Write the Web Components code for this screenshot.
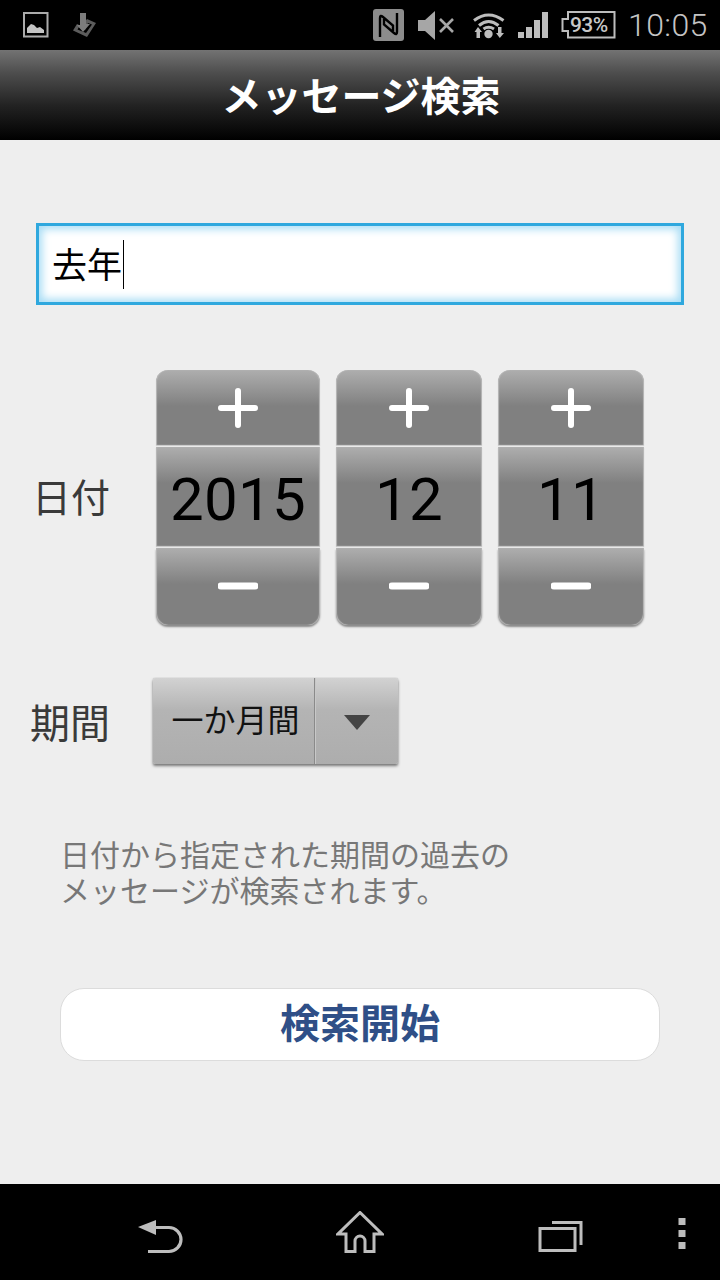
<!DOCTYPE html>
<html lang="ja">
<head>
<meta charset="utf-8">
<title>メッセージ検索</title>
<style>
    html, body { margin: 0; padding: 0; background: #eeeeee; }
    body {
        width: 720px;
        height: 1280px;
        overflow: hidden;
        display: flex;
        flex-direction: column;
        font-family: "Noto Sans CJK JP", "Noto Sans", sans-serif;
    }
    search-page { flex: 1; }
</style>
</head>
<body>
<status-bar></status-bar>
<title-bar>メッセージ検索</title-bar>
<search-page>
    <search-input value="去年"></search-input>
    <form-row label="日付" kind="date">
        <date-stepper value="2015" style="width:164px"></date-stepper>
        <date-stepper value="12" style="width:146px"></date-stepper>
        <date-stepper value="11" style="width:146px"></date-stepper>
    </form-row>
    <form-row label="期間" kind="period">
        <period-select value="一か月間"></period-select>
    </form-row>
    <help-text>日付から指定された期間の過去の<br>メッセージが検索されます。</help-text>
    <start-button>検索開始</start-button>
</search-page>
<nav-bar></nav-bar>

<script>
class StatusBar extends HTMLElement {
    constructor() {
        super();
        this.attachShadow({ mode: "open" });
        this.shadowRoot.innerHTML = `
            <style>
                :host { display: flex; height: 50px; background: #000; flex: none; }
                .bar { display: flex; align-items: flex-start; width: 100%; }
                svg { display: block; flex: none; }
                .time {
                    margin-left: 12px;
                    font: 300 32px/50px Roboto, sans-serif;
                    color: #c4c4c4;
                    letter-spacing: 0.4px;
                }
                .pct {
                    font: 500 21px "Roboto", sans-serif;
                    letter-spacing: -0.6px;
                    fill: #c8c8c8;
                }
            </style>
            <div class="bar">
                <svg width="26" height="26" viewBox="0 0 26 26" style="margin:12px 0 0 23px">
                    <rect x="1" y="1" width="23.5" height="23.5" fill="none" stroke="#ababab" stroke-width="2"/>
                    <path d="M4 21 V16 L8 12 L11 13 L14 16 L17 15 L21 18 V21 Z" fill="#c4c4c4"/>
                </svg>
                <svg width="24" height="26" viewBox="0 0 24 26" style="margin:12px 0 0 23px">
                    <path d="M15 7 L24 11 L15 25 L1 18.5 L5 12 L9 14 Z" fill="#5c5c5c"/>
                    <path d="M16 11 L20 12.5 L14 21 L5.5 17.5 L7 15 L11 18 L13 18 Z" fill="#000"/>
                    <path d="M8 1 H14 V12 L18 12 L11 20 L5 13 L8 13 Z" fill="#7c7c7c"/>
                </svg>
                <svg width="32" height="33" viewBox="0 0 32 33" style="margin:9px 0 0 277px">
                    <rect width="31" height="32" rx="3" fill="#8c8c8c"/>
                    <path d="M7 28 V9 Q7 5.5 10 8 L20 16.5 V22 M24 4 V23 Q24 26.5 21 24 L11 15.5 V10" fill="none" stroke="#000" stroke-width="2.4"/>
                </svg>
                <svg width="37" height="30" viewBox="0 0 37 30" style="margin:11px 0 0 13px">
                    <path d="M0 9 H7 L17 0 V29 L7 20 H0 Z" fill="#a6a6a6"/>
                    <path d="M22 8 L35 21 M35 8 L22 21" stroke="#a6a6a6" stroke-width="2.6" fill="none"/>
                </svg>
                <svg width="32" height="27" viewBox="0 0 32 27" style="margin:12px 0 0 18px">
                    <g fill="none" stroke="#bdbdbd" stroke-width="3">
                        <path d="M1 8.5 Q15.5 -2.5 30.5 8.5"/>
                        <path d="M6 13.5 Q15.5 5.5 25.5 13.5"/>
                        <path d="M10.5 17 Q15.5 13.5 21 17"/>
                    </g>
                    <circle cx="15.5" cy="22" r="4.2" fill="#bdbdbd"/>
                    <path d="M5 15 L9 20 H7 V26 H3.5 V20 H1.5 Z" fill="#bdbdbd"/>
                    <path d="M25 15 H28.5 V21 H31 L26.8 26 L23 21 H25 Z" fill="#bdbdbd"/>
                </svg>
                <svg width="31" height="26" viewBox="0 0 31 26" style="margin:12px 0 0 13px">
                    <rect x="0" y="20" width="6" height="6" fill="#bdbdbd"/>
                    <rect x="8" y="15" width="6" height="11" fill="#bdbdbd"/>
                    <rect x="16" y="8" width="6" height="18" fill="#bdbdbd"/>
                    <rect x="24" y="0" width="6" height="26" fill="#bdbdbd"/>
                </svg>
                <svg width="55" height="28" viewBox="0 0 55 28" style="margin:11px 0 0 12px">
                    <path d="M7 1 H53.5 V26.5 H7 V20 H1.5 V8 H7 Z" fill="none" stroke="#bdbdbd" stroke-width="2"/>
                    <text class="pct" x="9" y="21">93%</text>
                </svg>
                <span class="time">10:05</span>
            </div>
        `;
    }
}

class TitleBar extends HTMLElement {
    constructor() {
        super();
        this.attachShadow({ mode: "open" });
        this.shadowRoot.innerHTML = `
            <style>
                :host {
                    display: flex;
                    flex: none;
                    height: 90px;
                    align-items: center;
                    justify-content: center;
                    background: linear-gradient(#737373 0%, #4e4e4e 25%, #222 62%, #000 100%);
                    color: #fff;
                    font: 700 40px "Noto Sans CJK JP", sans-serif;
                    padding-left: 2px;
                    padding-bottom: 3px;
                    box-sizing: border-box;
                }
            </style>
            <slot></slot>
        `;
    }
}

class SearchPage extends HTMLElement {
    constructor() {
        super();
        this.attachShadow({ mode: "open" });
        this.shadowRoot.innerHTML = `
            <style>
                :host {
                    display: flex;
                    flex-direction: column;
                    background: #eeeeee;
                    padding-top: 83px;
                    box-sizing: border-box;
                }
            </style>
            <slot></slot>
        `;
    }
}

class SearchInput extends HTMLElement {
    constructor() {
        super();
        this.attachShadow({ mode: "open" });
        this.shadowRoot.innerHTML = `
            <style>
                :host {
                    display: flex;
                    align-items: center;
                    box-sizing: border-box;
                    width: 648px;
                    height: 82px;
                    margin-left: 36px;
                    padding-left: 13px;
                    background: #fff;
                    border: 3px solid #2fa8de;
                    box-shadow: inset 0 0 8px 3px #a6dcf5;
                    font: 400 35px "Noto Sans CJK JP", sans-serif;
                    color: #000;
                }
                span { position: relative; top: -2px; }
                .caret { top: 0; width: 1px; height: 49px; background: #000; margin-left: 1px; }
            </style>
            <span>${this.getAttribute("value")}</span><span class="caret"></span>
        `;
    }
}

class FormRow extends HTMLElement {
    constructor() {
        super();
        this.attachShadow({ mode: "open" });
        const period = this.getAttribute("kind") === "period";
        this.shadowRoot.innerHTML = `
            <style>
                :host {
                    display: flex;
                    align-items: center;
                    margin-top: ${period ? 53 : 65}px;
                    padding-left: ${period ? 30 : 32}px;
                    gap: 16px;
                }
                .label {
                    flex: none;
                    width: ${period ? 107 : 108}px;
                    padding-bottom: ${period ? 0 : 5}px;
                    font: 400 ${period ? 40 : 39}px "Noto Sans CJK JP", sans-serif;
                    color: #3a3a3a;
                    white-space: nowrap;
                }
            </style>
            <span class="label">${this.getAttribute("label")}</span>
            <slot></slot>
        `;
    }
}

class DateStepper extends HTMLElement {
    constructor() {
        super();
        this.attachShadow({ mode: "open" });
        this.shadowRoot.innerHTML = `
            <style>
                :host {
                    display: flex;
                    flex-direction: column;
                    flex: none;
                    gap: 2px;
                    height: 255px;
                }
                .seg {
                    display: flex;
                    align-items: center;
                    justify-content: center;
                    box-sizing: border-box;
                    background: linear-gradient(#aeaeae 0, #929292 22px, #808080 36px, #808080 100%);
                    box-shadow: inset 1px 0 1px #b8b8b8, inset -1px 0 1px #b8b8b8, 0 1px 1px #c8c8c8;
                }
                .plus { height: 75px; border-radius: 12px 12px 0 0; }
                .value {
                    height: 99px;
                    padding-top: 6px;
                    font: 400 60px Roboto, sans-serif;
                    color: #000;
                    letter-spacing: 0.3px;
                }
                .minus {
                    height: 77px;
                    padding-bottom: 2px;
                    border-radius: 0 0 12px 12px;
                    box-shadow: inset 1px 0 1px #b8b8b8, inset -1px 0 1px #b8b8b8, 0 2px 2px #8a8a8a;
                }
                svg { display: block; }
            </style>
            <div class="seg plus">
                <svg width="40" height="40" viewBox="0 0 40 40">
                    <path d="M20 3 V37 M3 20 H37" stroke="#fff" stroke-width="6" stroke-linecap="round"/>
                </svg>
            </div>
            <div class="seg value">${this.getAttribute("value")}</div>
            <div class="seg minus">
                <svg width="40" height="8" viewBox="0 0 40 8">
                    <path d="M3 4 H37" stroke="#fff" stroke-width="7" stroke-linecap="round"/>
                </svg>
            </div>
        `;
    }
}

class PeriodSelect extends HTMLElement {
    constructor() {
        super();
        this.attachShadow({ mode: "open" });
        this.shadowRoot.innerHTML = `
            <style>
                :host {
                    display: flex;
                    flex: none;
                    box-sizing: border-box;
                    width: 245px;
                    height: 86px;
                    background: linear-gradient(#d2d2d2 0, #b4b4b4 32px, #adadad 100%);
                    border-radius: 2px;
                    box-shadow: 0 2px 3px #777, 0 0 1px #999;
                    font: 400 32px "Noto Sans CJK JP", sans-serif;
                    color: #111;
                }
                .val {
                    display: flex;
                    align-items: center;
                    justify-content: center;
                    width: 162px;
                    padding: 0 0 6px 4px;
                    box-sizing: border-box;
                    border-right: 1px solid #8a8a8a;
                    box-shadow: 1px 0 0 #c8c8c8;
                }
                .arrow { flex: 1; display: flex; align-items: center; justify-content: center; padding-top: 2px; }
            </style>
            <div class="val">${this.getAttribute("value")}</div>
            <div class="arrow">
                <svg width="26" height="15" viewBox="0 0 26 15"><path d="M0 0 H26 L13 15 Z" fill="#444"/></svg>
            </div>
        `;
    }
}

class HelpText extends HTMLElement {
    constructor() {
        super();
        this.attachShadow({ mode: "open" });
        this.shadowRoot.innerHTML = `
            <style>
                :host {
                    display: block;
                    margin: 74px 0 0 60px;
                    font: 400 30px/36px "Liberation Sans", "Noto Sans CJK JP", sans-serif;
                    color: #777;
                }
            </style>
            <slot></slot>
        `;
    }
}

class StartButton extends HTMLElement {
    constructor() {
        super();
        this.attachShadow({ mode: "open" });
        this.shadowRoot.innerHTML = `
            <style>
                :host {
                    display: flex;
                    align-items: center;
                    justify-content: center;
                    box-sizing: border-box;
                    width: 600px;
                    height: 73px;
                    margin: 78px 0 0 60px;
                    padding-bottom: 7px;
                    background: #fff;
                    border: 1px solid #dcdcdc;
                    border-radius: 24px;
                    font: 700 40px "Noto Sans CJK JP", sans-serif;
                    color: #2f4f87;
                }
            </style>
            <slot></slot>
        `;
    }
}

class NavBar extends HTMLElement {
    constructor() {
        super();
        this.attachShadow({ mode: "open" });
        this.shadowRoot.innerHTML = `
            <style>
                :host { display: flex; flex: none; height: 96px; background: #000; align-items: flex-start; }
                svg { display: block; flex: none; }
            </style>
            <svg width="48" height="34" viewBox="0 0 48 34" style="margin:36px 0 0 137px">
                <path d="M1 7 L19 0 V15 Z" fill="#bdbdbd"/>
                <path d="M17 7.5 H32 A12 12 0 0 1 32 31.5 H11" fill="none" stroke="#bdbdbd" stroke-width="3.2"/>
            </svg>
            <svg width="48" height="42" viewBox="0 0 48 42" style="margin:27px 0 0 151px">
                <path d="M10 40.5 V23 H2 L24 1.5 L46 23 H38 V40.5 H29 V30 A5 5 0 0 0 19 30 V40.5 Z" fill="none" stroke="#bdbdbd" stroke-width="3"/>
            </svg>
            <svg width="46" height="32" viewBox="0 0 46 32" style="margin:37px 0 0 154px">
                <rect x="2" y="7.5" width="35" height="22" fill="none" stroke="#bdbdbd" stroke-width="3"/>
                <path d="M14 1.5 H43 V24" fill="none" stroke="#bdbdbd" stroke-width="3"/>
            </svg>
            <svg width="8" height="31" viewBox="0 0 8 31" style="margin:34px 0 0 94px">
                <rect width="7" height="7" x="0.5" fill="#bdbdbd"/>
                <rect width="7" height="7" x="0.5" y="12" fill="#bdbdbd"/>
                <rect width="7" height="7" x="0.5" y="24" fill="#bdbdbd"/>
            </svg>
        `;
    }
}

customElements.define("status-bar", StatusBar);
customElements.define("title-bar", TitleBar);
customElements.define("search-page", SearchPage);
customElements.define("search-input", SearchInput);
customElements.define("form-row", FormRow);
customElements.define("date-stepper", DateStepper);
customElements.define("period-select", PeriodSelect);
customElements.define("help-text", HelpText);
customElements.define("start-button", StartButton);
customElements.define("nav-bar", NavBar);
</script>
</body>
</html>
